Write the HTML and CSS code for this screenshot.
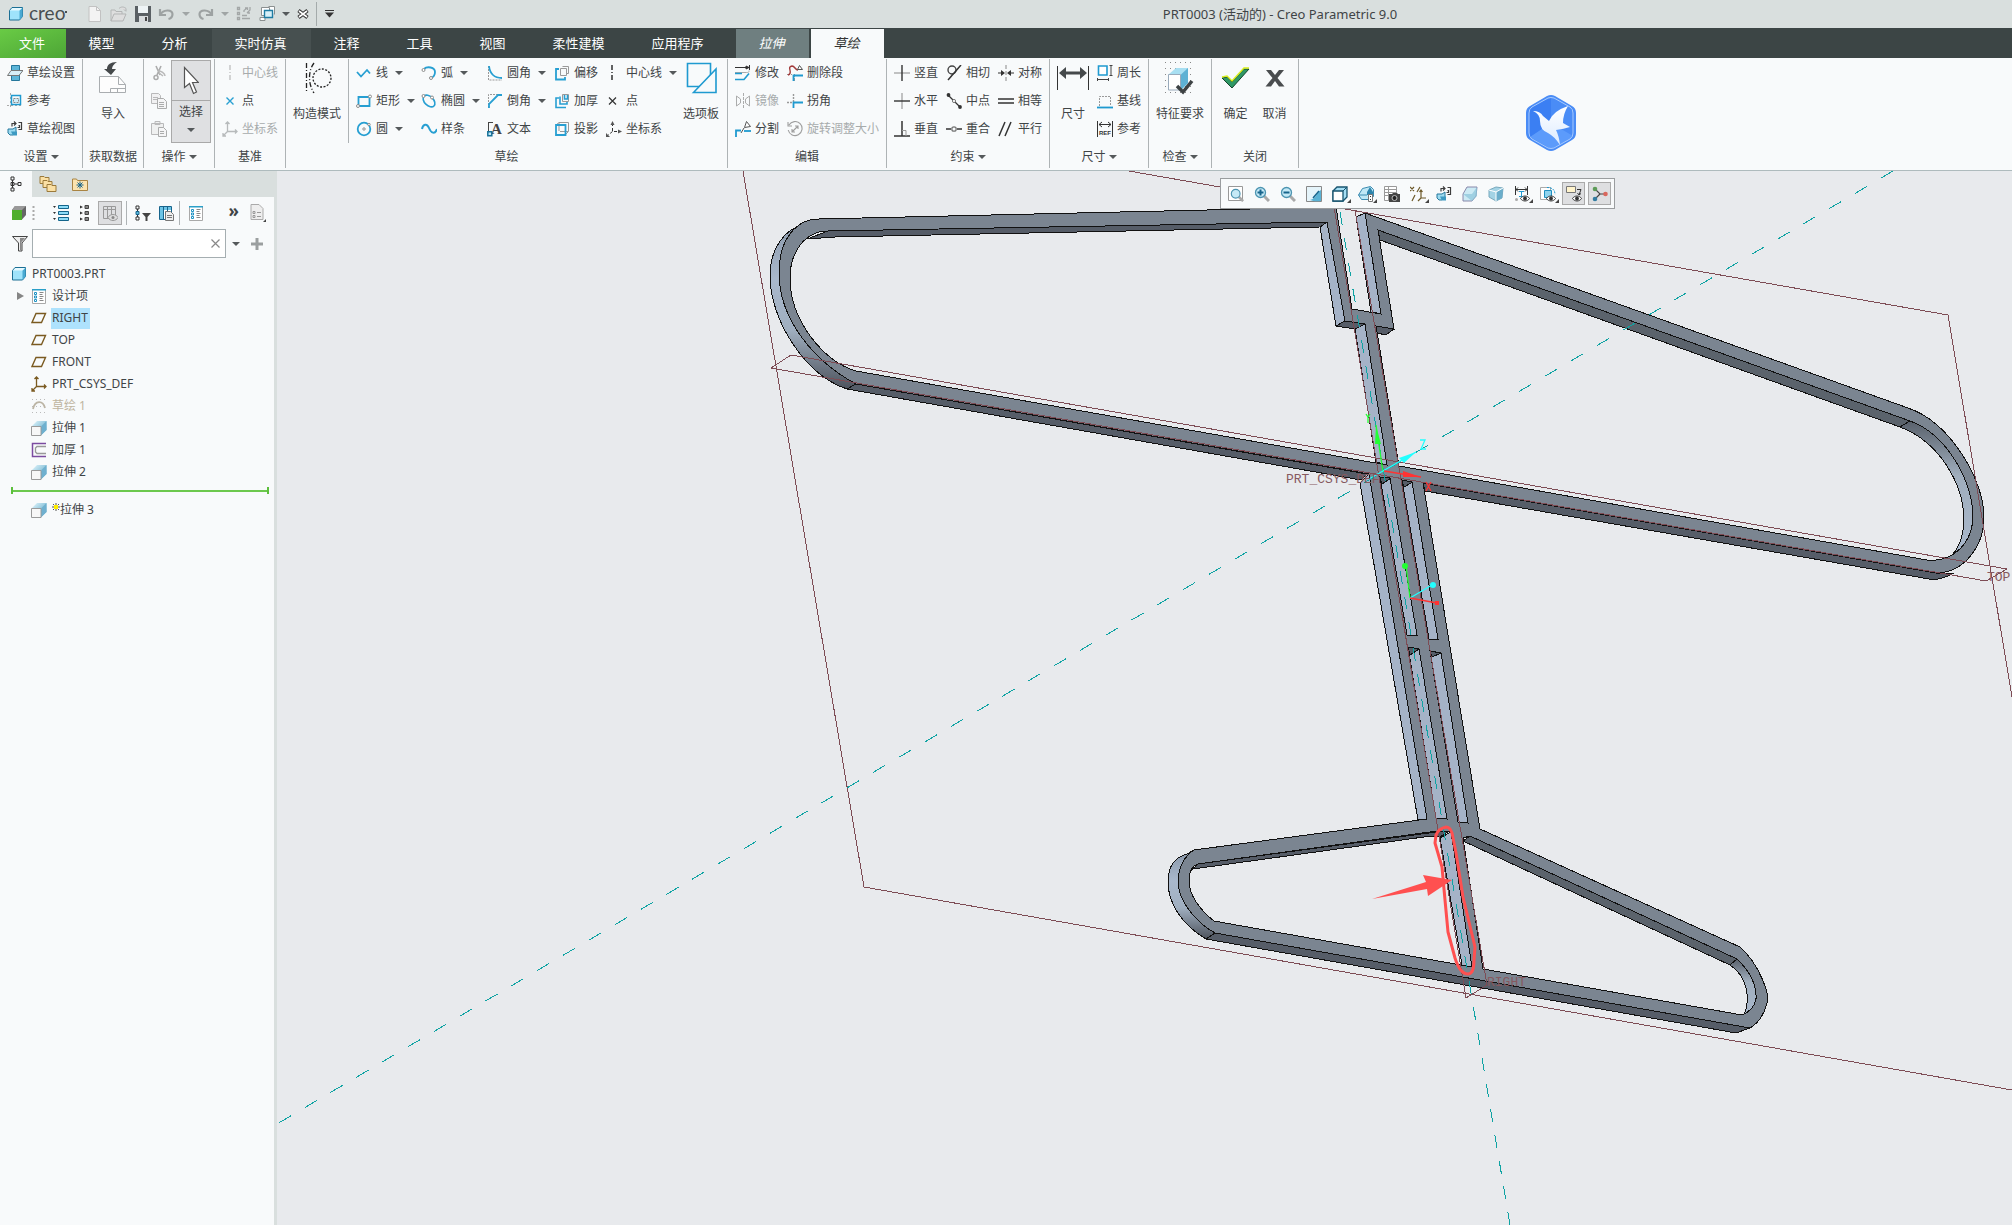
FILE: index.html
```html
<!DOCTYPE html>
<html lang="zh-CN">
<head>
<meta charset="utf-8">
<title>PRT0003 (活动的) - Creo Parametric 9.0</title>
<link rel="stylesheet" href="styles.css">
</head>
<body>
<svg class="defs" aria-hidden="true">
  <defs>
    <linearGradient id="cubeTop" x1="0" y1="0" x2="1" y2="1"><stop offset="0" stop-color="#e4f7fd"/><stop offset="1" stop-color="#4a9cc0"/></linearGradient>
    <symbol id="i-part" viewBox="0 0 16 16"><path d="M1.500 4.500 4 1.500h10.500v9l-3 3.500h-10z" fill="#9fe3fb" stroke="#1c6f94"/><path d="M11.500 4.500 14.500 1.500v9l-3 3.500z" fill="#49a9d2"/><path d="M2 4.500 4.500 2h9.500l-2.500 2.500z" fill="#e6f9ff"/></symbol>
    <symbol id="i-extrude" viewBox="0 0 16 16"><path d="M1 6 6 1h9.500v9L10 15z" fill="url(#cubeTop)"/><path d="M10 6.500 15.500 1v9L10 15.500z" fill="#6fb0cf"/><path d="M.5 6.500h9.500v9H.5z" fill="#f7f7f7" stroke="#9a9a9a"/></symbol>
    <symbol id="i-plane" viewBox="0 0 16 16"><path d="M5 3.500h9.500l-4 9H1z" fill="none" stroke="#7a5a20" stroke-width="1.400"/></symbol>
    <symbol id="i-list" viewBox="0 0 16 16"><path d="M1.500 1.500h13v14h-13z" fill="#fff" stroke="#a9a9a9"/><path d="M1 1h14v1.500H1z" fill="#2b9fc8"/><path d="M3.500 4.500h2v2h-2zM3.500 8h2v2h-2zM3.500 11.500h2v2h-2z" fill="#fff" stroke="#1f93c4"/><path d="M8.500 4.500h4M8.500 6.500h3M8.500 8.500h4M8.500 10.500h3M8.500 12.500h4" stroke="#888"/></symbol>
    <symbol id="i-axes" viewBox="0 0 16 16"><path d="M5.500 1v9.500H15M5.500 10.500 1 15M3.500 3l2-2 2 2M13 8.500l2 2-2 2M1 12v3h3" fill="none" stroke="currentColor" stroke-width="1.300"/></symbol>
    <symbol id="i-eye" viewBox="0 0 10 7"><path d="M.5 3.500C2.500.2 7.500.2 9.500 3.500 7.500 6.800 2.500 6.800.5 3.500z" fill="#fff" stroke="#333"/><circle cx="5" cy="3.500" r="1.900" fill="#333"/></symbol>
    <symbol id="i-view" viewBox="0 0 16 16"><path d="M1 8h5l3-2v5l-3 3H3l-2-2z" fill="#9edcf1" stroke="#26799e"/><path d="M4 10.500h6v4H6z" fill="#3d9ac2"/><path d="M5 5.500v-3h4M7 .5l2 2-2 2M11.500 1.500h3v7h-3M11.500 4.500h1v2h-2" fill="none" stroke="#3d3d3d" stroke-width="1.200"/></symbol>
    <symbol id="i-lens" viewBox="0 0 16 16"><path d="m10 10 5 5" stroke="#a9a9a9" stroke-width="3"/><circle cx="6.500" cy="6.500" r="5" fill="#c5e9f6" stroke="#4c94b1" stroke-width="1.300"/></symbol>
    <linearGradient id="faceArc" x1="0" y1="0" x2="0" y2="1"><stop offset="0" stop-color="#8896a8"/><stop offset=".35" stop-color="#a9b8cc"/><stop offset=".65" stop-color="#a0afc0"/><stop offset="1" stop-color="#4d535d"/></linearGradient>
    <linearGradient id="faceArcIn" x1="0" y1="0" x2="0" y2="1"><stop offset="0" stop-color="#59616c"/><stop offset=".4" stop-color="#a0aebd"/><stop offset="1" stop-color="#a9b8cc"/></linearGradient>
    <linearGradient id="bird" x1="0" y1="0" x2="0" y2="1"><stop offset="0" stop-color="#fff"/><stop offset="1" stop-color="#dcebff"/></linearGradient>
  </defs>
</svg>

<header class="titlebar">
  <div class="brand"><svg width="16" height="16"><use href="#i-part"/></svg><span class="brand-name">creo<i></i></span></div>
  <div class="quick">
    <button aria-label="新建"><svg width="16" height="16" viewBox="0 0 16 16"><path d="M2 .5h7.500l4 4v11H2z" fill="#f3f3f3" stroke="#c2c2c2"/><path d="M9.500.5v4h4" fill="none" stroke="#c2c2c2"/></svg></button>
    <button aria-label="打开"><svg width="18" height="16" viewBox="0 0 18 16"><path d="M1 15V4h4l1 1.500h6V8M1 15l3-7h12l-3 7zM9 2.500c2-2 5-2 7 0V5M14 3.500 16 5.500" fill="#dedede" stroke="#b3b5b5"/></svg></button>
    <button aria-label="保存"><svg width="16" height="16" viewBox="0 0 16 16"><path d="M0 0h16v16H0z" fill="#5a6064"/><path d="M3 0h10v7H3z" fill="#eef4f6"/><path d="M4 10h9v6H4z" fill="#d8dcde"/><path d="M10 11h2v4h-2z" fill="#444"/></svg></button>
    <button class="more pale" aria-label="撤消"><svg width="17" height="14" viewBox="0 0 17 14"><path d="M2 2v6h6M2.500 7.500C5 2.500 14 2 14.500 7c0 3-2 4.500-4 5" fill="none" stroke="#9da2a2" stroke-width="2.200"/></svg></button>
    <button class="more pale" aria-label="重做"><svg width="17" height="14" viewBox="0 0 17 14"><path d="M15 2v6H9M14.500 7.500C12 2.500 3 2 2.500 7c0 3 2 4.500 4 5" fill="none" stroke="#9da2a2" stroke-width="2.200"/></svg></button>
    <button aria-label="重新生成"><svg width="16" height="16" viewBox="0 0 16 16"><path d="M1.500 1.500h2v2h-2zM1.500 6.500h2v2h-2zM1.500 11.500h2v2h-2zM6 12.500h8M6 9.500h5M8 6V4.500l3-2.500M9 2h2.500v2M14 1v3l-3 3M14 7h-2.500" fill="none" stroke="#a3a7a7" stroke-width="1.300"/></svg></button>
    <button class="more" aria-label="窗口"><svg width="16" height="16" viewBox="0 0 16 16"><path d="M2.500 1.500h8v8h-8zM9.500.5h6v8" fill="#fff" stroke="#8b9090"/><path d="M1 11.500h5v3H1z" fill="#fff" stroke="#8b9090"/><path d="M5.500 4.500h8v7h-8z" fill="#d8f0f8" stroke="#1f7ca3" stroke-width="1.400"/></svg></button>
    <button aria-label="关闭窗口"><svg width="12" height="10" viewBox="0 0 12 10"><path d="m1.500 1.500 9 7m0-7-9 7" stroke="#333" stroke-width="3.600"/><path d="m2 2 8 6m0-6-8 6" stroke="#fff" stroke-width="1.600"/></svg></button>
    <button class="customize" aria-label="自定义"><svg width="9" height="8" viewBox="0 0 9 8"><path d="M0 .5h9" stroke="#333"/><path d="M0 2.500h9L4.500 7.500z" fill="#333"/></svg></button>
  </div>
  <h1 class="window-title">PRT0003 (活动的) - Creo Parametric 9.0</h1>
</header>

<nav class="tabs">
  <button class="file">文件</button><button>模型</button><button>分析</button><button class="wide lit">实时仿真</button><button>注释</button><button>工具</button><button>视图</button><button class="wide">柔性建模</button><button class="wide">应用程序</button><button class="context">拉伸</button><button class="context active">草绘</button>
</nav>

<div class="ribbon">
  <section class="group g-setup">
    <div class="cmds">
      <button><svg viewBox="0 0 16 16"><path d="M4.500.5h8v15h-8z" fill="#5cb5d8" stroke="#25779b"/><path d="M4 5.500h12l-4 5H.5z" fill="#d6eef7" stroke="#777"/></svg>草绘设置</button>
      <button><svg viewBox="0 0 16 16"><path d="M3.500 0v16M0 12.500h16" stroke="#aaa" stroke-dasharray="2 2"/><path d="M4.500 2.500h9v9h-9z" fill="none" stroke="#1f9ad0" stroke-width="1.500"/><path d="M6.500 5.500h5v4h-5z" fill="#cdeefb" stroke="#888" stroke-dasharray="2 1"/></svg>参考</button>
      <button><svg><use href="#i-view"/></svg>草绘视图</button>
    </div>
    <button class="group-name more">设置</button>
  </section>
  <section class="group g-data">
    <div class="cmds"><button class="big"><svg width="30" height="34" viewBox="0 0 30 34"><path d="M1.500 15.500h19l7 8v8h-26z" fill="#fdfdfd" stroke="#a9adb0"/><path d="M20.500 15.500v8h7M12.500 31.500v-4h15M19.500 27.500v4" fill="none" stroke="#a9adb0"/><path d="M19 1C12 1 9 4 9 8H6l7 6 5-6h-4c0-3 2-5 5-7z" fill="#45494b"/></svg>导入</button></div>
    <div class="group-name">获取数据</div>
  </section>
  <section class="group g-ops">
    <div class="cmds">
      <button class="off" aria-label="剪切"><svg viewBox="0 0 16 16"><path d="M5 1l4 9M10 1 6 10" stroke="#999" stroke-width="1.600"/><circle cx="5" cy="12.500" r="2" fill="none" stroke="#999" stroke-width="1.500"/><path d="M7 6c3 0 7 2 7 5M8 8l4 3" fill="none" stroke="#aaa" stroke-width="1.500"/></svg></button>
      <button class="off" aria-label="复制"><svg viewBox="0 0 16 16"><path d="M.5.5h7l2 2v8h-9zM2 4.500h5M2 6.500h5" fill="#f0f0f0" stroke="#aaa"/><path d="M6.500 5.500h6l3 3v7h-9zM8 9.500h5M8 11.500h5M8 13.500h5" fill="#f5f5f5" stroke="#999"/></svg></button>
      <button class="off" aria-label="粘贴"><svg viewBox="0 0 16 16"><path d="M.5 2.500h12v11H.5zM4 .5h5v3H4z" fill="#eee" stroke="#aaa"/><path d="M7.500 6.500h5l3 3v6h-8zM9 10.500h4M9 12.500h4" fill="#f5f5f5" stroke="#999"/></svg></button>
      <button class="select-tool more"><svg width="16" height="30" viewBox="0 0 16 30"><path d="M1.500 1.500v20l5-4 4 10 3-1.500-4-9.500h6z" fill="#fff" stroke="#555" stroke-width="1.200"/></svg><span>选择</span></button>
    </div>
    <button class="group-name more">操作</button>
  </section>
  <section class="group g-datum">
    <div class="cmds">
      <button class="off"><svg viewBox="0 0 16 16"><path d="M8 0v16" stroke="#999" stroke-dasharray="5 2 1 2"/></svg>中心线</button>
      <button><svg viewBox="0 0 16 16"><path d="m4.500 4.500 7 7m0-7-7 7" stroke="#29a0d2" stroke-width="1.400"/></svg>点</button>
      <button class="off"><svg><use href="#i-axes"/></svg>坐标系</button>
    </div>
    <div class="group-name">基准</div>
  </section>
  <section class="group g-sketch">
    <div class="cmds">
      <button class="big construction"><svg width="30" height="34" viewBox="0 0 30 34"><path d="M4.500 2v30M12 2C6 10 6 23 12 32" fill="none" stroke="#222" stroke-width="1.300" stroke-dasharray="5 2 1 2"/><circle cx="20" cy="17" r="9" fill="none" stroke="#222" stroke-width="1.300" stroke-dasharray="2 1.500"/></svg>构造模式</button>
      <hr>
      <button class="more"><svg class="blue" viewBox="0 0 16 16"><path d="m1 7 4 4.500L11 5l3 3.500" stroke-width="1.800"/></svg>线</button>
      <button class="more"><svg class="blue" viewBox="0 0 16 16"><path d="M2.500 4h11v9h-11z" stroke-width="1.800"/><circle cx="2" cy="13" r="1.500" class="knob"/><circle cx="14" cy="3.500" r="1.500" class="knob"/></svg>矩形</button>
      <button class="more"><svg class="blue" viewBox="0 0 16 16"><circle cx="8" cy="8" r="6.300" stroke-width="1.800"/><circle cx="8" cy="8" r="1.200" class="knob"/><circle cx="13" cy="3.500" r="1.200" class="knob"/></svg>圆</button>
      <button class="more"><svg class="blue" viewBox="0 0 16 16"><path d="M3 4c3-3 11-2 11 3 0 3-1 5-4 6" stroke-width="1.800"/><circle cx="2.500" cy="5" r="1.500" class="knob"/><circle cx="10" cy="13" r="1.500" class="knob"/></svg>弧</button>
      <button class="more"><svg class="blue" viewBox="0 0 16 16"><ellipse cx="8" cy="8" rx="7" ry="4.500" transform="rotate(45 8 8)" stroke-width="1.600"/><circle cx="2.500" cy="3" r="1.500" class="knob"/><circle cx="11" cy="4.500" r="1.500" class="knob"/></svg>椭圆</button>
      <button><svg class="blue" viewBox="0 0 16 16"><path d="M1 8c1-5 5-6 7-1s6 7 8 1" stroke-width="2"/></svg>样条</button>
      <button class="more"><svg class="blue" viewBox="0 0 16 16"><path d="M1.500 1v14H15" class="dash"/><path d="M2 1c1 8 5 12 13 12" stroke-width="1.800"/></svg>圆角</button>
      <button class="more"><svg class="blue" viewBox="0 0 16 16"><path d="M1.500 15V1.500H15" class="dash"/><path d="M2 15V11L11 2h4" stroke-width="1.800"/></svg>倒角</button>
      <button><svg viewBox="0 0 16 16"><path d="M1.500 1.500V10M1 1.500h5" stroke="#444"/><text x="4" y="13" class="icon-letter">A</text><path d="M.8 10.800h4v4h-4z" fill="#bde6f5" stroke="#167199" stroke-width="1.500"/></svg>文本</button>
      <button><svg class="blue" viewBox="0 0 16 16"><path d="M6.500 3.500h6v7h-6zM8.500 1.500h6v7h-2" class="gray"/><path d="M5 4H2v10.500h9V12" stroke-width="1.800"/></svg>偏移</button>
      <button><svg class="blue" viewBox="0 0 16 16"><path d="M8.500 1.500h6v7h-6z" class="gray"/><path d="M10.500 2v4h3V2M6 3.500v7.500h7V9M5 5H2v9.500h10" stroke-width="1.600"/></svg>加厚</button>
      <button><svg class="blue" viewBox="0 0 16 16"><path d="M2 4l3-2.500h9.500v9L12 13M5 2v8M6 10.500h8" class="gray"/><path d="M2 4h9.500v10H2z" stroke-width="1.800"/></svg>投影</button>
      <button class="more"><svg viewBox="0 0 16 16"><path d="M6 0v16" stroke="#222" stroke-width="1.400" stroke-dasharray="5 2 1 2"/></svg>中心线</button>
      <button><svg viewBox="0 0 16 16"><path d="m3 4.500 7 7m0-7-7 7" stroke="#333" stroke-width="1.200"/></svg>点</button>
      <button><svg viewBox="0 0 16 16"><path d="M6.500 2v8.500H15M6.500 10.500 1 15" fill="none" stroke="#333" stroke-dasharray="3 2"/><path d="M4.500 4l2-4 2 4zM12 8.500l4 2-4 2zM0 12v4h4z" fill="#555"/></svg>坐标系</button>
      <button class="big palette"><svg width="32" height="34" viewBox="0 0 32 34"><path d="M2.500 2.500h23v23h-23z" fill="none" stroke="#1f9ad0" stroke-width="1.600"/><path d="M8.500 31.500 31 8v23.500z" fill="#f8fafb" stroke="#1f9ad0" stroke-width="1.600"/></svg>选项板</button>
    </div>
    <div class="group-name">草绘</div>
  </section>
  <section class="group g-edit">
    <div class="cmds">
      <button><svg viewBox="0 0 16 16"><path d="M0 2.500h15M14.500 0v5M11 1l3 1.500L11 4z" stroke="#333" fill="#333"/><path d="M0 7.500h10c4 0 4 0 4-2" fill="none" stroke="#aaa"/><path d="M0 8.500h7M0 14.500h9l5-6" fill="none" stroke="#1f9ad0" stroke-width="1.600"/></svg>修改</button>
      <button class="off"><svg viewBox="0 0 16 16"><path d="M8.500 0v16" stroke="#999" stroke-dasharray="3 1"/><path d="M1.500 3v10l4-3V6zM14.500 3v10l-4-3V6z" fill="none" stroke="#999"/></svg>镜像</button>
      <button><svg viewBox="0 0 16 16"><path d="M1 16V9.500h5" fill="none" stroke="#1f9ad0" stroke-width="1.800"/><path d="M9 10h7" stroke="#1f9ad0" stroke-width="1.800"/><path d="m9.500 6.500 2-6 4 5zM9 7l-3 5" fill="#fff" stroke="#555"/></svg>分割</button>
      <button><svg viewBox="0 0 16 16"><path d="M7.500 16V8M0 9.500h5" stroke="#999" stroke-dasharray="3 1"/><path d="M6.500 16v-5.500H16" fill="none" stroke="#1f9ad0" stroke-width="1.800"/><path d="M1 10c6-2-2-8 4-9 3 0 3 4 6 4" fill="none" stroke="#a33c3c" stroke-width="1.400"/><path d="m10.500 4.500 2-4 3 4z" fill="#fff" stroke="#555"/></svg>删除段</button>
      <button><svg viewBox="0 0 16 16"><path d="M6.500 1v8M0 9.500h5" stroke="#999" stroke-width="1.400" stroke-dasharray="2 1"/><path d="M6.500 15v-5.500H16" fill="none" stroke="#1f9ad0" stroke-width="1.800"/></svg>拐角</button>
      <button class="off"><svg viewBox="0 0 16 16"><path d="M2 4a7 7 0 1 1-.8 5M1 1v4h4M5 11l6-6M8 5h3v3M5 8v3h3" fill="none" stroke="#888" stroke-width="1.100"/></svg>旋转调整大小</button>
    </div>
    <div class="group-name">编辑</div>
  </section>
  <section class="group g-constrain">
    <div class="cmds">
      <button><svg viewBox="0 0 16 16"><path d="M0 8h16" stroke="#888"/><path d="M8 0v16" stroke="#333" stroke-width="1.400"/></svg>竖直</button>
      <button><svg viewBox="0 0 16 16"><path d="M8 0v16" stroke="#888"/><path d="M0 8h16" stroke="#333" stroke-width="1.400"/></svg>水平</button>
      <button><svg viewBox="0 0 16 16"><path d="M8 0v15M0 15h16" stroke="#333" stroke-width="1.500"/><path d="M8 9.500h4V15" fill="none" stroke="#999"/></svg>垂直</button>
      <button><svg viewBox="0 0 16 16"><circle cx="6" cy="5" r="4" fill="none" stroke="#444" stroke-width="1.400"/><path d="M2 15 15 0" stroke="#333" stroke-width="1.500"/></svg>相切</button>
      <button><svg viewBox="0 0 16 16"><path d="m2 2 12 12" stroke="#333" stroke-width="1.300"/><circle cx="2.500" cy="2" r="1.900" fill="#333"/><circle cx="14" cy="14" r="1.900" fill="#333"/><circle cx="8" cy="8" r="1.600" fill="#fff" stroke="#777"/></svg>中点</button>
      <button><svg viewBox="0 0 16 16"><path d="M0 8h5M11 8h5" stroke="#333" stroke-width="1.400"/><circle cx="8" cy="8" r="2.200" fill="none" stroke="#777" stroke-width="1.300"/></svg>重合</button>
      <button><svg viewBox="0 0 16 16"><path d="M8 0v16" stroke="#888" stroke-dasharray="4 2"/><path d="M0 8h5M11 8h5" stroke="#333"/><path d="m3 5 4 3-4 3zM13 5 9 8l4 3z" fill="#333"/></svg>对称</button>
      <button><svg viewBox="0 0 16 16"><path d="M0 6h16M0 10h16" stroke="#333" stroke-width="1.600"/></svg>相等</button>
      <button><svg viewBox="0 0 16 16"><path d="M1 15 7 1M7 15l6-14" stroke="#333" stroke-width="1.500"/></svg>平行</button>
    </div>
    <button class="group-name more">约束</button>
  </section>
  <section class="group g-dim">
    <div class="cmds">
      <button class="big"><svg width="32" height="34" viewBox="0 0 32 34"><path d="M.5 5v24M31.500 5v24" stroke="#333"/><path d="M2 12l7-6v4.500h14V6l7 6-7 6v-4.500H9V18z" fill="#45494b"/></svg>尺寸</button>
      <button><svg viewBox="0 0 16 16"><path d="M1.500 1h8.500v9h-8.500z" fill="#fff" stroke="#1f9ad0" stroke-width="1.600"/><path d="M14 1v9M12.500.5h3M12.500 10.500h3M1 14.500h10M.5 13v3M11.500 13v3" stroke="#444"/></svg>周长</button>
      <button><svg viewBox="0 0 16 16"><path d="M2.500 13V3.500h11V13" fill="none" stroke="#999" stroke-dasharray="2 1"/><path d="M0 14.500h16" stroke="#1f9ad0" stroke-width="1.800"/></svg>基线</button>
      <button><svg viewBox="0 0 16 16"><path d="M.5 0v16M15.500 0v16M2 3.500h12M5 1 2 3.500 5 6M11 1l3 2.500L11 6" fill="none" stroke="#333"/><text x="2" y="14" class="icon-ref">REF</text></svg>参考</button>
    </div>
    <button class="group-name more">尺寸</button>
  </section>
  <section class="group g-check">
    <div class="cmds"><button class="big"><svg width="32" height="34" viewBox="0 0 32 34"><path d="M1 1.500h30M1 7.500h30M1 13.500h30M1 19.500h30M1 25.500h30M1 31.500h30" stroke="#888" stroke-dasharray="1 4"/><path d="M4.500 13.500 12 7h12v15l-7 7H4.500z" fill="#a8dff2"/><path d="m17 13.500 7-6.500v15l-7 7z" fill="#5eb1d4"/><path d="M4.500 13.500h12V29h-12z" fill="#fff" stroke="#9ab"/><path d="m13 25 6 6 9-11" fill="none" stroke="#3d4244" stroke-width="3.500"/></svg>特征要求</button></div>
    <button class="group-name more">检查</button>
  </section>
  <section class="group g-close">
    <div class="cmds">
      <button class="big"><svg width="30" height="34" viewBox="0 0 30 34"><path d="m1 17 5-1 5 5L23 8h5L11 27z" fill="#2f9865" stroke="#15452c"/><path d="m1 16 5-1 5 5L23 7h5" fill="none" stroke="#d6ee1e" stroke-width="1.500"/></svg>确定</button>
      <button class="big"><svg width="22" height="34" viewBox="0 0 22 34"><path d="M2 9h5l4 5 4-5h5l-6.500 8 7 8.500h-5.500L11 20l-4 5.500H1.500L8.500 17z" fill="#4a4d4f"/></svg>取消</button>
    </div>
    <div class="group-name">关闭</div>
  </section>
  <svg class="bird-badge" width="52" height="58" viewBox="0 0 52 58" role="img" aria-label="飞鸟">
    <path d="M22 2q4-2 8 0l17 10q4 2 4 7v20q0 5-4 7L30 56q-4 2-8 0L5 46q-4-2-4-7V19q0-5 4-7z" fill="#4a8cf6"/>
    <path d="M26 4v25L4 44V17q0-3 3-5z" fill="#3b7ff3"/><path d="M26 29 48 42q-1 2-3 3L26 55 5 43z" fill="#5c9bfb"/>
    <path d="M23 4q3-1 6 0l16 9q3 2 3 6v20q0 4-3 6l-16 9q-3 1-6 0L7 45q-3-2-3-6V19q0-4 3-6z" fill="none" stroke="#a6caff"/>
    <path d="M8 17q7 0 10 5l6 5Q28 17 43 12 38 20 38 29l7 4q-6 2-14 3 3 6 4 15-6-9-12-12-8-3-8-12 0-7-7-10z" fill="url(#bird)"/>
  </svg>
</div>

<div class="workspace">
  <aside class="navigator">
    <div class="nav-tabs">
      <button class="current" aria-label="模型树"><svg width="12" height="16" viewBox="0 0 12 16"><path d="M1 1h3v3H1zM1 6.500h3v3H1zM1 12h3v3H1zM8 6.500h3v3H8zM4 8h4M2.500 4v8" fill="none" stroke="#333"/></svg></button>
      <button aria-label="文件夹浏览器"><svg width="18" height="16" viewBox="0 0 18 16"><g fill="#fbe0a4" stroke="#9b7a3b"><path d="M1 .5h4l1 1h4v6H1z"/><path d="M4 4.500h4l1 1h4v6H4z"/><path d="M8 8.500h4l1 1h4v6H8z"/></g></svg></button>
      <button aria-label="收藏夹"><svg width="16" height="16" viewBox="0 0 16 16"><path d="M.5 3h4l1 1.500h10v10H.5z" fill="#fbe3ae" stroke="#a98443"/><path d="M8 5.500v7M4.500 9h7M5.500 6.500l5 5m0-5-5 5" stroke="#17648c"/></svg></button>
    </div>
    <div class="nav-tools">
      <button aria-label="零件"><svg width="14" height="14" viewBox="0 0 14 14"><path d="M0 4 3 0h11v9l-4 4.500H0z" fill="#666"/><path d="M0 4h10v10H0z" fill="#4fae2c"/><path d="m0 4 3-4h11l-4 4z" fill="#999"/></svg></button>
      <button aria-label="拖动"><svg width="3" height="16" viewBox="0 0 3 16"><path d="M1.500 1v14" stroke="#aaa" stroke-width="2" stroke-dasharray="2 2"/></svg></button>
      <button aria-label="展开"><svg width="16" height="16" viewBox="0 0 16 16"><path d="M0 1h3L1.500 3zM0 7h3L1.500 9zM0 13h3l-1.500 2z" fill="#333"/><path d="M5.500.5h10v3h-10zM5.500 6.500h10v3h-10zM5.500 12.500h10v3h-10z" fill="#8cdcf8" stroke="#14658b"/></svg></button>
      <button aria-label="折叠"><svg width="9" height="16" viewBox="0 0 9 16"><path d="M0 .5 3 2 0 3.500zM0 6.500 3 8 0 9.500zM0 12.500 3 14l-3 1.500z" fill="#333"/><path d="M5 .5h3.500v3H5zM5 6.500h3.500v3H5zM5 12.500h3.500v3H5z" fill="#888" stroke="#444"/></svg></button>
      <button class="pressed" aria-label="树列"><svg width="16" height="16" viewBox="0 0 16 16"><path d="M1.500 1.500h12v12h-12zM1.500 4.500h12M5.500 1.500v12M9.500 1.500v12" fill="none" stroke="#999"/><path d="M6 12.500c2-4 8-4 10 0-2 4-8 4-10 0z" fill="#ddd" stroke="#999"/><circle cx="11" cy="12.500" r="1.500" fill="#888"/></svg></button>
      <hr>
      <button aria-label="树过滤器"><svg width="16" height="16" viewBox="0 0 16 16"><path d="M1 1h3v3H1zM1 12h3v3H1zM2.500 4v8" fill="none" stroke="#333"/><path d="M1 6.500h3v3H1z" fill="#58b8dd" stroke="#17648c"/><path d="M7 8h9l-3.500 4v4h-2v-4z" fill="#444"/></svg></button>
      <button aria-label="列设置"><svg width="16" height="16" viewBox="0 0 16 16"><path d="M.5 1.500h12v13H.5z" fill="#fff" stroke="#17648c"/><path d="M1 2h11v3H1zM1 2h3v12H1z" fill="#6cc4e6"/><path d="M4.500 2v12M8.500 2v12" stroke="#17648c"/><path d="M6.500 6.500h5l3 3v6h-8zM8 10.500h5M8 12.500h5" fill="#eee" stroke="#777"/></svg></button>
      <hr>
      <button aria-label="列表"><svg width="16" height="16"><use href="#i-list"/></svg></button>
      <button class="chevrons" aria-label="更多">»</button>
      <button aria-label="设置"><svg width="16" height="18" viewBox="0 0 16 18"><path d="M1 .5h8l4 4v11H1z" fill="#eee" stroke="#aaa"/><path d="M3 7.500h2v2H3zM3 11.500h2v2H3zM7 8.500h4M7 12.500h4" fill="none" stroke="#999"/><path d="M16 15v3h-3z" fill="#444"/></svg></button>
    </div>
    <div class="nav-search">
      <svg width="16" height="16" viewBox="0 0 16 16"><path d="M.5.5h15L10 7v8H6.500V7z" fill="#eee" stroke="#444"/><path d="M8 2h5L9.500 6V14H8z" fill="#888"/></svg>
      <div class="search-box"><input type="text" aria-label="搜索模型树"><button aria-label="清除"><svg width="9" height="9" viewBox="0 0 9 9"><path d="m.5.5 8 8m0-8-8 8" stroke="#888" stroke-width="1.200"/></svg></button></div>
      <button class="more" aria-label="搜索选项"></button>
      <button aria-label="添加"><svg width="12" height="12" viewBox="0 0 12 12"><path d="M6 0v12M0 6h12" stroke="#9b9fa0" stroke-width="3"/></svg></button>
    </div>
    <ul class="tree">
      <li class="root"><svg><use href="#i-part"/></svg><span>PRT0003.PRT</span></li>
      <li class="folder"><svg><use href="#i-list"/></svg><span>设计项</span></li>
      <li><svg><use href="#i-plane"/></svg><span class="picked">RIGHT</span></li>
      <li><svg><use href="#i-plane"/></svg><span>TOP</span></li>
      <li><svg><use href="#i-plane"/></svg><span>FRONT</span></li>
      <li class="csys"><svg><use href="#i-axes"/></svg><span>PRT_CSYS_DEF</span></li>
      <li class="hidden-item"><svg viewBox="0 0 16 16"><path d="M1 1.500h15M1 8.500h15M1 14.500h15" stroke="#bbb" stroke-dasharray="1 3"/><path d="M2 11c2-9 10-9 12-1" fill="none" stroke="#bcb5a5" stroke-width="1.800"/></svg><span>草绘 1</span></li>
      <li><svg><use href="#i-extrude"/></svg><span>拉伸 1</span></li>
      <li><svg viewBox="0 0 16 16"><path d="M15 1.500H1.500v13H15" fill="none" stroke="#7b4ba0" stroke-width="1.500"/><path d="M15 4.500H6L4.500 6v4L6 11.500h9" fill="none" stroke="#999" stroke-width="1.300"/></svg><span>加厚 1</span></li>
      <li><svg><use href="#i-extrude"/></svg><span>拉伸 2</span></li>
    </ul>
    <hr class="insert-here">
    <ul class="tree">
      <li class="fresh"><svg><use href="#i-extrude"/></svg><span><svg class="spark" viewBox="0 0 8 8"><path d="M4 0v8M0 4h8M1 1l6 6M7 1 1 7" stroke="#555"/><path d="M2 2h4v4H2z" fill="#ffee00"/></svg>拉伸 3</span></li>
    </ul>
  </aside>

  <main class="viewport">
    <svg class="scene" viewBox="277 171 1735 1054" preserveAspectRatio="xMinYMin slice">
      <g class="edge">
        <path fill="url(#faceArc)" d="M847 389C805 375 770 320 770 276C770 248 785 229 803 225L819 219C797 219 779 238 779 273C779 320 815 362 856 384Z"/>
        <path class="dark" d="M847 389 856 384 1367 474 1361 480Z"/>
        <path class="dark" d="M807 239 828 231 1327 222 1320 227 835 237Z"/>
        <path class="light" d="M1320 227 1327 222 1345 321 1336 326Z"/>
        <path class="dark" d="M1336 326 1345 321 1365 324 1355 329Z"/>
        <path class="light" d="M1355 329 1365 324 1387 465 1376 462Z"/>
        <path class="light" d="M1365 213 1356 217 1371 312 1382 314Z"/>
        <path class="dark" d="M1376 326 1394 329 1386 335 1377 333Z"/>
        <path class="dark2" d="M1378 230 1910 421 1900 427 1380 240Z"/>
        <path fill="url(#faceArcIn)" d="M1900 427C1940 442 1964 485 1964 520Q1963 546 1949 558C1964 550 1973 535 1973 515C1973 485 1949 435 1910 421Z"/>
        <path class="dark" d="M1423 483 1936 573 1954 573Q1940 581 1929 579L1425 491Z"/>
        <path class="light" d="M1360 483 1369 474 1427 819 1418 820Z"/>
        <path class="light" d="M1380 477 1390 478 1417 635 1407 635ZM1402 480 1412 482 1438 639 1429 639ZM1408 647 1419 649 1447 819 1436 818ZM1430 651 1441 653 1468 823 1458 822Z"/>
        <path class="dark" d="M1380 477 1391 478 1382 484ZM1402 480 1413 482 1404 487ZM1408 647 1419 649 1410 655ZM1430 651 1441 653 1432 657Z"/>
        <path fill="url(#faceArc)" d="M1206 939C1182 925 1168 903 1168 882Q1168 859 1187 854L1194 850Q1179 860 1178 881C1178 900 1195 922 1215 933Z"/>
        <path class="dark" d="M1206 939 1215 933 1750 1028 1736 1033Z"/>
        <path class="dark" d="M1193 869 1198 864 1451 830 1440 837 1431 836Z"/>
        <path class="light" d="M1440 838 1451 832 1472 967 1462 965Z"/>
        <path class="dark2" d="M1463 841 1470 836 1737 959 1730 965Z"/>
        <path fill="url(#faceArcIn)" d="M1730 965C1747 976 1751 998 1744 1015Q1754 1010 1756 999C1757 987 1751 972 1737 959Z"/>
        <path class="front" d="M819 219 1336 207 1352 309 1381 314 1365 213 1908 408C1950 422 1984 480 1984 517C1984 545 1965 573 1936 573L1423 483 1480 829 1740 947C1760 965 1770 995 1767 1003Q1763 1020 1750 1028L1215 933C1195 922 1178 900 1178 881Q1179 860 1194 850L1427 819 1369 474 856 384C815 362 779 320 779 273C779 238 797 219 819 219Z
          M828 231 1327 222 1345 321 1365 324 1387 465 856 371C825 362 790 322 790 278C790 252 805 231 828 231Z
          M1378 230 1910 421C1949 435 1973 485 1973 515C1973 542 1954 563 1927 560L1399 466 1376 326 1394 329Z
          M1380 477 1390 478 1417 635 1407 635Z M1402 480 1412 482 1438 639 1429 639Z M1408 647 1419 649 1447 819 1436 818Z M1430 651 1441 653 1468 823 1458 822Z
          M1198 864 1437 831 1451 832 1472 967 1214 921C1200 910 1189 895 1189 881Q1189 867 1198 864Z
          M1470 836 1737 959C1751 972 1757 987 1756 999Q1754 1010 1742 1015L1483 969 1463 838Z"/>
      </g>
      <g class="plane">
        <path d="M743 171 864 887 2012 1090M1129 171 1948 315 2012 697"/>
        <path d="M771 368 791 355 2007 569 1986 581Z"/>
        <path d="M1334 207 1466 998 1487 985 1355 210"/>
      </g>
      <path class="axis" d="M1893 171 277 1124" stroke-dasharray="14 16"/>
      <path class="axis" d="M1340 212 1510 1225" stroke-dasharray="13 13"/>
      <g fill="none" stroke-width="1.300">
        <path d="M1383 472 1376 425" stroke="#2f3"/><path d="m1376 426-1 18h6z" fill="#2f3"/>
        <path d="m1366 414 2 3 2-3M1368 417v6" stroke="#2f3"/>
        <path d="M1369 479 1416 452" stroke="#2ff"/><path d="m1416 452-17 6 5 5z" fill="#2ff"/><path d="M1420 440h5l-4 9h5" stroke="#2ff"/>
        <path d="M1384 471 1421 477" stroke="#f33"/><path d="m1421 477-18-6v6z" fill="#f33"/><path d="m1426 482 5 9m0-9-5 9" stroke="#f33"/>
        <path d="M1410 598 1406 566" stroke="#2f3"/><circle cx="1405" cy="566" r="3" fill="#2f3"/>
        <path d="M1410 598 1432 585" stroke="#2ff"/><circle cx="1433" cy="585" r="3" fill="#2ff"/>
        <path d="M1410 598 1437 603" stroke="#f33"/><path d="M1435 601h4v4h-4z" fill="#f33"/>
      </g>
      <g class="note">
        <text x="1286" y="483">PRT_CSYS_DEF</text><text x="1987" y="581">TOP</text><text x="1487" y="986">RIGHT</text>
      </g>
      <path class="marker" d="M1446 827Q1438 829 1436 835L1435 843 1442 867 1445 900 1448 932 1455 958Q1460 974 1468 974 1474 974 1474 960L1475 947 1463 897 1456 853 1452 833Q1450 827 1446 827Z"/>
      <path d="M1372 899 1426 882 1423 875 1452 880 1428 896 1427 889Z" fill="#ff5050"/>
    </svg>

    <div class="view-tools">
      <button aria-label="重新调整"><svg viewBox="0 0 16 16"><path d="M.5.5h14v14H.5z" fill="#fff" stroke="#999"/><use href="#i-lens" x="2" y="2" width="14" height="14"/></svg></button>
      <button aria-label="放大"><svg viewBox="0 0 16 16"><use href="#i-lens" width="16" height="16"/><path d="M6.500 3.500v6M3.500 6.500h6" stroke="#17648c" stroke-width="2"/></svg></button>
      <button aria-label="缩小"><svg viewBox="0 0 16 16"><use href="#i-lens" width="16" height="16"/><path d="M3.500 6.500h6" stroke="#17648c" stroke-width="2"/></svg></button>
      <button aria-label="重画"><svg viewBox="0 0 16 16"><path d="M.5.5h15v15H.5z" fill="#cbe9f4" stroke="#888"/><path d="M1 1h14v3L6 15H1z" fill="#fff" opacity=".5"/><path d="M15 4c-3 1-5 9-11 10 5 2 9 1 11 1z" fill="#5bb2d4"/><path d="m7 12 6-7" stroke="#17648c" stroke-width="1.500"/></svg></button>
      <button class="fly" aria-label="显示样式"><svg viewBox="0 0 16 16"><path d="m1 5 4-4h10v10l-4 4H1z" fill="#a5def4" stroke="#17546f" stroke-width="1.300"/><path d="M1 5h10v10H1z" fill="#fff" stroke="#17546f" stroke-width="1.300"/><path d="m11 5 4-4" stroke="#17546f"/></svg></button>
      <button class="fly" aria-label="已保存方向"><svg viewBox="0 0 16 16"><path d="m.5 9 4-6.500 8-2 3 3v7l-5 3h-7z" fill="#bfe7f5" stroke="#3b8bb0"/><path d="M.5 9H9" stroke="#3b8bb0"/><path d="m9 6 3-5 3 5v3H9z" fill="#2d84ac"/><path d="M10.500 8.500h4v7h-4z" fill="#fff" stroke="#777"/><path d="M12 10.500h1M12 13.500h1" stroke="#333"/></svg></button>
      <button aria-label="视图管理器"><svg viewBox="0 0 16 16"><path d="M.5.5h12v14H.5zM.5 3.500h12M.5 6.500h12M.5 9.500h12M4.500.5v14" fill="#fff" stroke="#999"/><path d="M5 8h3l1-1h4l1 1h2v8H5z" fill="#444"/><circle cx="10.500" cy="12" r="2.500" fill="#222" stroke="#bbb"/></svg></button>
      <button class="fly" aria-label="基准显示"><svg viewBox="0 0 16 16"><path d="m0 1 4 4M4 1 0 5M10 1 7 6M5 9l-3 6M11 4v8h5M11 12l-3 3M9.500 6 11 4l1.500 2" fill="none" stroke="#6d5928" stroke-width="1.200"/></svg></button>
      <button aria-label="草绘视图"><svg><use href="#i-view"/></svg></button>
      <button aria-label="修剪模型"><svg viewBox="0 0 16 16"><path d="m1 8 4-7h10l-1 9-4 5H1z" fill="#cceaf4" stroke="#88a"/><path d="M1 8h9l5-7v9l-5 5z" fill="#8bc4da" opacity=".7"/></svg></button>
      <button aria-label="透明"><svg viewBox="0 0 16 16"><path d="m1 4 7-3 7 1-1 10-6 3-7-4z" fill="#a3d3e5" stroke="#79a9bd"/><path d="m8 6 7-4-1 10-6 3z" fill="#6baecb"/><path d="M1 4l7 2v9M8 6l7-4" stroke="#fff" fill="none"/></svg></button>
      <button class="fly" aria-label="尺寸显示"><svg viewBox="0 0 16 16"><path d="M1.500 0v9M13.500 0v9M2 3.500h11M4 1.500l-2 2 2 2M11 1.500l2 2-2 2" fill="none" stroke="#333"/><path d="M7.500 5v6M5 5.500h5M5 10.500h5" stroke="#1f9ad0"/><circle cx="2.500" cy="13.500" r="1.500" fill="#aaa"/><use href="#i-eye" x="6" y="9" width="10" height="7"/></svg></button>
      <button class="fly" aria-label="草绘显示"><svg viewBox="0 0 16 16"><path d="M.5 1.500h10v12H.5z" fill="#fff" stroke="#aaa"/><path d="M4.500 4.500h7v7h-7z" fill="#8fd3ee" stroke="#1f8fc0"/><path d="M7 1.500c5 0 8 2 8 7" fill="none" stroke="#1f9ad0" stroke-dasharray="2 1"/><use href="#i-eye" x="6" y="9" width="10" height="7"/></svg></button>
      <button class="pressed" aria-label="注释显示"><svg viewBox="0 0 16 16"><path d="M.5.500h9v6h-9z" fill="#fff4cc" stroke="#777"/><path d="M11 3.500h4L13 9M11.500 7l1.500 2 2-1.500" fill="none" stroke="#333"/><use href="#i-eye" x="6" y="9" width="10" height="7"/></svg></button>
      <button class="pressed" aria-label="旋转中心"><svg viewBox="0 0 16 16"><path d="m3 3 5 5h6M8 8l-5 5" fill="none" stroke="#444" stroke-width="1.200"/><circle cx="3" cy="3" r="2.300" fill="#5d9b58"/><circle cx="13.500" cy="8" r="2.300" fill="#d9675d"/><circle cx="3" cy="13" r="2.300" fill="#347ca0"/></svg></button>
    </div>
  </main>
</div>
</body>
</html>
```
FILE: styles.css
```css
* { box-sizing: border-box; }

body {
  margin: 0;
  min-height: 100vh;
  display: flex;
  flex-direction: column;
  background: #f8fafb;
  color: #3f4446;
  font: 12px/16px "Noto Sans", "Noto Sans CJK SC", sans-serif;
}

button {
  margin: 0;
  padding: 0;
  border: 0;
  background: none;
  color: inherit;
  font: inherit;
  white-space: nowrap;
}

svg { display: block; flex: none; }
.defs { position: absolute; width: 0; height: 0; }

/* drop-down arrow */
.more::after {
  content: "";
  border: 4px solid transparent;
  border-top-color: #55595b;
  border-bottom: 0;
}
.more.pale::after { border-top-color: #a0a5a5; }

/* title bar */
.titlebar {
  display: flex;
  align-items: center;
  height: 29px;
  padding-left: 8px;
  background: #d9dfde;
  border-bottom: 1px solid #3c4545;
}
.brand { display: flex; align-items: center; gap: 5px; width: 79px; }
.brand-name { font: 19px/24px "Lato", sans-serif; color: #4a4f51; padding-bottom: 3px; display: flex; }
.brand-name i { width: 2px; height: 2px; margin-top: 10px; background: #4a4f51; }
.quick { display: flex; align-items: center; gap: 7px; width: 300px; }
.quick button { display: flex; align-items: center; gap: 7px; }
.quick .customize { border-left: 1px solid #a4abab; padding-left: 8px; height: 24px; }
.window-title {
  flex: 1;
  margin: 0;
  padding-left: 161px;
  text-align: center;
  font: 13px/20px "Noto Sans", "Noto Sans CJK SC", sans-serif;
}

/* ribbon tabs */
.tabs { display: flex; height: 29px; background: #3c4545; color: #fff; }
.tabs button { width: 73px; padding: 0 2px 1px 0; font-size: 13px; }
.tabs .wide { width: 99px; }
.tabs .file { width: 66px; background: linear-gradient(160deg, #69cb45, #4da536); }
.tabs .lit { background: #475050; }
.tabs .context { margin-left: 8px; background: #6f7f80; font-style: italic; }
.tabs .active { margin-left: 2px; background: #f8fafb; color: #333; }

/* ribbon */
.ribbon {
  display: flex;
  height: 113px;
  padding-top: 1px;
  border-bottom: 1px solid #aebbbd;
  overflow: hidden;
}
.group {
  display: flex;
  flex: none;
  flex-direction: column;
  height: 109px;
  border-right: 1px solid #aeb3b5;
}
.cmds {
  display: grid;
  grid-auto-flow: column;
  grid-template-rows: repeat(3, 28px);
  align-items: center;
  height: 88px;
}
.cmds button { display: flex; align-items: center; gap: 4px; }
.cmds button.more { gap: 4px; }
.cmds button.more::after { margin-left: 3px; }
.cmds svg:not([width]) { width: 16px; height: 16px; }
.cmds .off { color: #a7abac; }
.cmds .off svg { opacity: .8; }
.cmds .big {
  grid-row: 1 / 4;
  flex-direction: column;
  align-self: start;
  gap: 11px;
  padding-top: 2px;
}
.cmds hr { grid-row: 1 / 4; width: 1px; height: 84px; margin: 0; border: 0; background: #aeb3b5; }
.group-name { display: flex; align-items: center; justify-content: center; gap: 3px; height: 22px; }

.g-setup { width: 83px; }
.g-setup .cmds { padding-left: 7px; }
.g-data { width: 61px; }
.g-ops { width: 71px; }
.g-ops .cmds { padding-left: 7px; grid-template-columns: 20px 40px; }
.g-ops .cmds .select-tool {
  grid-row: 1 / 4;
  flex-direction: column;
  align-self: start;
  gap: 8px;
  height: 83px;
  margin-top: 1px;
  padding-top: 5px;
  border: 1px solid #a9a9a9;
  background: linear-gradient(#a9a9a9, #a9a9a9) 0 39px / 100% 1px no-repeat #dfe0e2;
}
.g-ops .cmds .select-tool::after { margin: 0; }
.g-datum { width: 71px; }
.g-datum .cmds { padding-left: 7px; }
.g-sketch { width: 442px; }
.g-sketch .cmds { padding-left: 7px; grid-template-columns: 55px 8px 65px 66px 67px 52px 76px 38px; }
.g-sketch .cmds .construction { margin-right: 7px; }
.g-edit { width: 159px; }
.g-edit .cmds { padding-left: 7px; grid-template-columns: 52px 100px; }
.g-constrain { width: 163px; }
.g-constrain .cmds { padding-left: 7px; grid-template-columns: 52px 52px 52px; }
.g-dim { width: 99px; }
.g-dim .cmds { padding-left: 7px; grid-template-columns: 40px 52px; }
.g-dim .cmds .big { margin-right: 8px; }
.g-check { width: 63px; }
.g-close { width: 87px; }
.g-close .cmds { padding-left: 4px; grid-template-columns: 39px 39px; }
.bird-badge { margin: 35px 0 0 226px; }

.blue path, .blue circle, .blue ellipse { fill: none; stroke: #279fd2; }
.blue .knob { fill: #fff; stroke: #8c8c8c; }
.blue .gray { stroke: #999; }
.blue .dash { stroke: #999; stroke-dasharray: 2 1; }
.icon-letter { font: bold 15px "Liberation Serif", serif; fill: #444; }
.icon-ref { font: bold 6px "Liberation Sans", sans-serif; fill: #333; }

/* workspace */
.workspace { display: flex; flex: 1; }

.navigator { width: 277px; flex: none; border-right: 3px solid #d9dfde; }
.nav-tabs { display: flex; height: 26px; margin-right: -3px; background: #d9dfde; }
.nav-tabs button { width: 32px; display: grid; place-items: center; }
.nav-tabs .current { background: #f8fafb; }

.nav-tools { display: flex; align-items: center; gap: 6px; height: 32px; padding: 0 8px 0 12px; }
.nav-tools button:nth-of-type(3) { margin-left: 12px; }
.nav-tools button:nth-of-type(4) { margin-left: 5px; }
.nav-tools hr { width: 1px; height: 24px; margin: 0 2px 0 -2px; border: 0; background: #aeb3b5; }
.nav-tools hr + button + button { margin-left: 2px; }
.nav-tools .pressed { margin-left: 3px; width: 24px; height: 24px; }
.nav-tools .chevrons { margin: 0 5px 4px auto; font: bold 17px/16px "Noto Sans", sans-serif; }
.pressed { display: grid; place-items: center; border: 1px solid #aaa; background: #dedfe1; }

.nav-search { display: flex; align-items: center; height: 29px; padding-left: 12px; }
.search-box {
  display: flex;
  align-items: center;
  width: 194px;
  height: 29px;
  margin: 0 6px 0 4px;
  padding-right: 5px;
  border: 1px solid #a5aeb1;
  background: #fff;
}
.search-box input { flex: 1; min-width: 0; border: 0; outline: 0; background: none; font: inherit; }
.nav-search .more { display: flex; margin-right: 11px; }

.tree { margin: 0; padding: 5px 0 0; list-style: none; }
.tree li { display: flex; align-items: center; height: 22px; padding-left: 31px; gap: 4px; }
.tree li > svg { width: 16px; height: 16px; }
.tree li > span { display: flex; align-items: center; height: 21px; padding: 0 2px 0 1px; line-height: 20px; }
.tree .root { padding-left: 11px; }
.tree .folder { padding-left: 17px; }
.tree .folder::before { content: ""; border: 4px solid transparent; border-left: 7px solid #858585; border-right: 0; margin-right: 3px; }
.tree .picked { background: #aee2fd; }
.tree .csys svg { color: #7a5a20; }
.tree .hidden-item { color: #beb5a0; }
.tree .spark { width: 8px; height: 8px; margin-bottom: 6px; }
.insert-here {
  height: 7px;
  margin: 4px 5px 0 11px;
  border: 0 solid #5cbf3c;
  border-width: 0 2px;
  background: linear-gradient(#6cc84d, #6cc84d) 0 3px / 100% 2px no-repeat;
}

/* graphics area */
.viewport { position: relative; flex: 1; min-width: 0; overflow: hidden; background: #e8eaed; }
.scene { width: 100%; height: 100%; }
.edge path { stroke: #111; stroke-width: 1; shape-rendering: crispEdges; }
.front { fill: #7b8591; fill-rule: evenodd; }
.dark { fill: #565d68; }
.dark2 { fill: #5b636c; }
.light { fill: #a5b3c7; }
.plane path { fill: none; stroke: #7d4c55; shape-rendering: crispEdges; }
.axis { stroke: #0fa3a3; shape-rendering: crispEdges; }
.note { font: 13px "Liberation Mono", monospace; fill: #86595f; }
.marker { fill: none; stroke: #ff5050; stroke-width: 3; stroke-linejoin: round; }

.view-tools {
  position: absolute;
  top: 7px;
  left: 943px;
  display: flex;
  gap: 3px;
  padding: 3px;
  border: 1px solid #9a9d9f;
  background: #f8fafb;
}
.view-tools button { position: relative; width: 23px; height: 23px; display: grid; place-items: center; }
.view-tools svg { width: 16px; height: 16px; }
.view-tools .fly::after {
  content: "";
  position: absolute;
  right: 0;
  bottom: 2px;
  border: 2px solid #444;
  border-top-color: transparent;
  border-left-color: transparent;
}
```
